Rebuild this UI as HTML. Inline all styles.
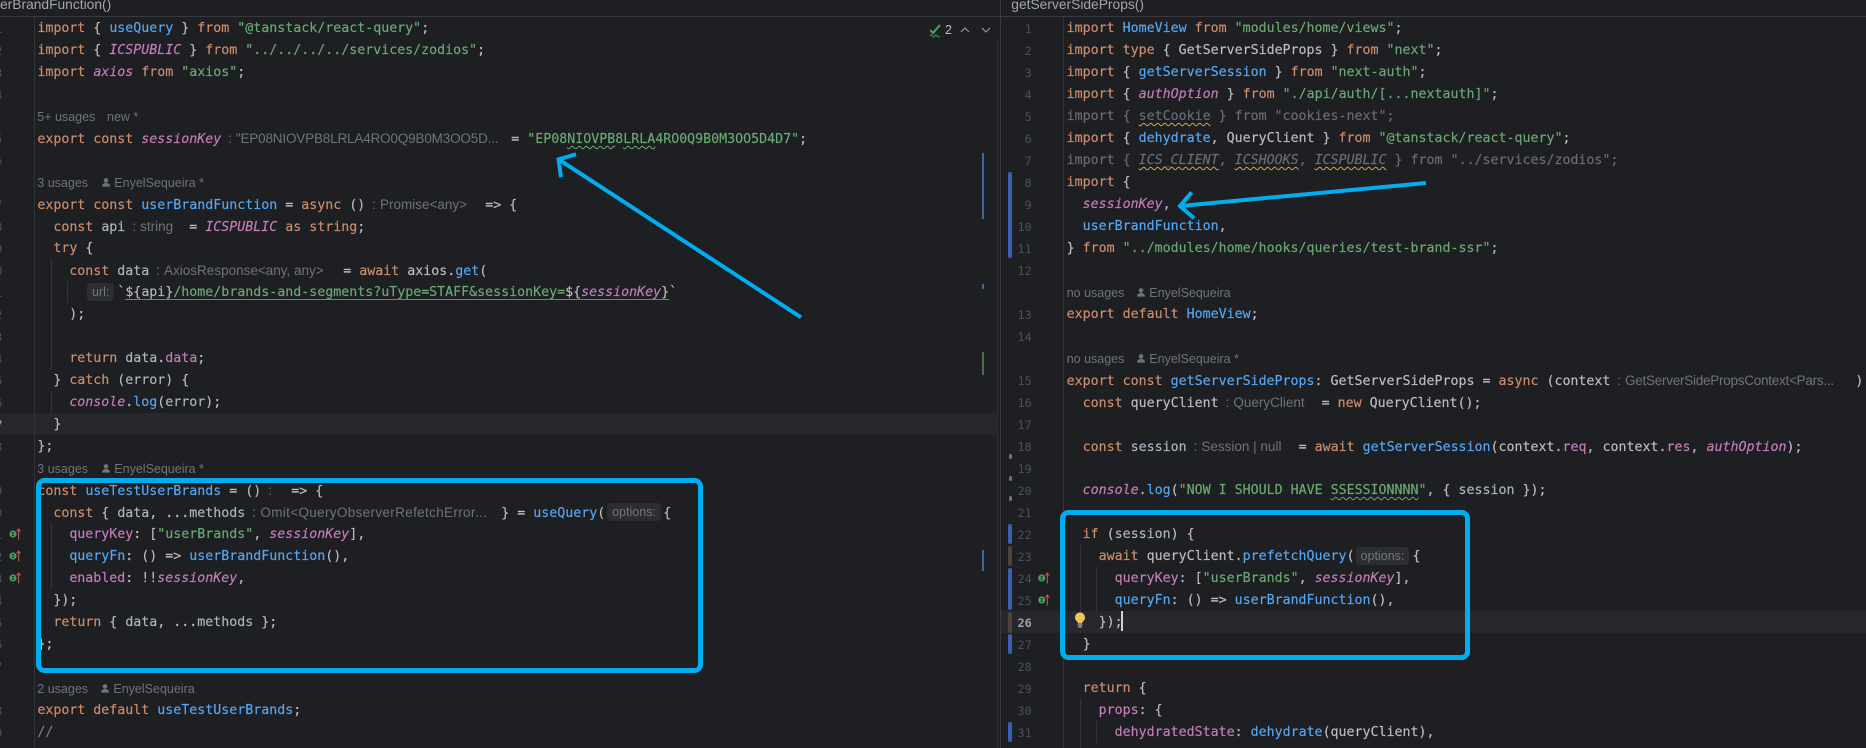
<!DOCTYPE html>
<html><head><meta charset="utf-8">
<style>
html,body{margin:0;padding:0;width:1866px;height:748px;overflow:hidden;background:#1e1f22}
body{position:relative;font-family:"DejaVu Sans Mono","Liberation Mono",monospace;font-size:13.29px;color:#bcbec4}
.a{position:absolute}
.l{position:absolute;height:22px;line-height:22px;white-space:pre;left:37.33px;margin-top:1px;-webkit-text-stroke:.15px}
.r{left:1066.67px}
.n{position:absolute;height:22px;line-height:22px;width:40px;text-align:right;font-size:11.8px;color:#4b5059;margin-top:.5px}
.nl{left:-37.7px}.nr{left:991.7px}
.k{color:#cf8e6d}.s{color:#6aab73}.f{color:#56a8f5}.p{color:#c77dbb}.pi{color:#c77dbb;font-style:italic}.v{color:#a9b7c6}
.d,.d *{color:#6a6d74}
.h{display:inline-block;box-sizing:border-box;padding-left:7px;font-family:"Liberation Sans",sans-serif;font-size:13.5px;color:#6f737a;overflow:visible;white-space:pre;-webkit-text-stroke:0}
.h i{font-style:normal;margin-right:4px}
.sp{display:inline-block}
.u{position:absolute;height:22px;line-height:22px;font-family:"Liberation Sans",sans-serif;font-size:12.5px;color:#6f737a;white-space:pre;margin-top:1px}
.w{text-decoration:underline wavy #6aab73 1px;text-underline-offset:2px}
.y{text-decoration:underline wavy #d8a93a 1px;text-underline-offset:2px}
.t{text-decoration:underline #7a7e85 1px;text-underline-offset:3px}
.chip{position:absolute;height:18px;line-height:18px;background:#2b2d30;border-radius:4px;text-align:center;font-family:"Liberation Sans",sans-serif;font-size:12.5px;color:#72767d}
.m{position:absolute;left:1008.3px;width:4px;border-radius:2px;background:#3b60b0}
.b{background:#4e443c}
.g{position:absolute;width:1px;background:#313438}
.dot{position:absolute;left:1008.6px;width:3.4px;height:5px;border-radius:2px;background:#6f737a}
</style></head><body>

<!-- backgrounds -->
<div class="a" style="left:0;top:413px;width:997px;height:22px;background:#26282e"></div>
<div class="a" style="left:1001px;top:611px;width:865px;height:22px;background:#26282e"></div>
<div class="a" style="left:0;top:16px;width:1866px;height:1px;background:#393b40"></div>
<div class="a" style="left:1000px;top:0;width:1px;height:748px;background:#393b40"></div>
<div class="a" style="left:997px;top:40px;width:1px;height:708px;background:#2f3136"></div>
<div class="a" style="left:34px;top:17px;width:1px;height:731px;background:#313438"></div>
<div class="a" style="left:1063px;top:17px;width:1px;height:731px;background:#313438"></div>

<!-- breadcrumbs -->
<div class="a" style="left:0;top:-3px;height:16px;line-height:16px;font-family:'Liberation Sans',sans-serif;font-size:13.8px;color:#a3a6ad;white-space:pre">erBrandFunction()</div>
<div class="a" style="left:1011.3px;top:-3px;height:16px;line-height:16px;font-family:'Liberation Sans',sans-serif;font-size:13.8px;color:#a3a6ad;white-space:pre">getServerSideProps()</div>

<!-- indent guides -->
<div class="g" style="left:51px;top:259px;height:110px"></div>
<div class="g" style="left:67px;top:281px;height:22px"></div>
<div class="g" style="left:51px;top:391px;height:22px"></div>
<div class="g" style="left:51px;top:523px;height:66px"></div>
<div class="g" style="left:1080px;top:545px;height:88px"></div>
<div class="g" style="left:1096px;top:567px;height:44px"></div>
<div class="g" style="left:1080px;top:699px;height:49px"></div>
<div class="g" style="left:1096px;top:721px;height:22px"></div>

<!-- scroll markers -->
<div class="a" style="left:982px;top:153px;width:2px;height:66px;background:#3a6a9e"></div>
<div class="a" style="left:982px;top:284px;width:2px;height:5px;background:#3a6a9e"></div>
<div class="a" style="left:982px;top:352px;width:2px;height:23px;background:#44704f"></div>
<div class="a" style="left:982px;top:550px;width:2px;height:21px;background:#3a6a9e"></div>

<!-- inspection widget -->
<svg class="a" style="left:930px;top:22px" width="68" height="16" viewBox="2 0 68 16">
<path d="M2 8l3 3 7-8" fill="none" stroke="#4a9c54" stroke-width="2.2"/>
<path d="M2 14q1.2-2 2.4 0t2.4 0 2.4 0 2.400 0" fill="none" stroke="#4a9c54" stroke-width="1"/>
<path d="M33 10l4-4 4 4" fill="none" stroke="#9da0a8" stroke-width="1.1"/>
<path d="M54 6l4 4 4-4" fill="none" stroke="#9da0a8" stroke-width="1.1"/>
</svg>
<div class="a" style="left:945px;top:22px;height:16px;line-height:16px;font-family:'Liberation Sans',sans-serif;font-size:12.5px;color:#bcbec4">2</div>

<!-- left line numbers -->
<div class="n nl" style="top:17px">1</div><div class="n nl" style="top:39px">2</div><div class="n nl" style="top:61px">3</div><div class="n nl" style="top:83px">4</div><div class="n nl" style="top:127px">5</div><div class="n nl" style="top:149px">6</div><div class="n nl" style="top:193px">7</div><div class="n nl" style="top:215px">8</div><div class="n nl" style="top:237px">9</div><div class="n nl" style="top:259px">10</div><div class="n nl" style="top:281px">11</div><div class="n nl" style="top:303px">12</div><div class="n nl" style="top:325px">13</div><div class="n nl" style="top:347px">14</div><div class="n nl" style="top:369px">15</div><div class="n nl" style="top:391px">16</div><div class="n nl" style="top:413px;color:#a1a3ab;font-weight:bold">17</div><div class="n nl" style="top:435px">18</div><div class="n nl" style="top:479px">19</div><div class="n nl" style="top:501px">20</div><div class="n nl" style="top:523px">21</div><div class="n nl" style="top:545px">22</div><div class="n nl" style="top:567px">23</div><div class="n nl" style="top:589px">24</div><div class="n nl" style="top:611px">25</div><div class="n nl" style="top:633px">26</div><div class="n nl" style="top:655px">27</div><div class="n nl" style="top:699px">28</div><div class="n nl" style="top:721px">29</div>

<!-- left code -->
<div class="l" style="top:17px"><span class="k">import</span> { <span class="f">useQuery</span> } <span class="k">from</span> <span class="s">"@tanstack/react-query"</span>;</div>
<div class="l" style="top:39px"><span class="k">import</span> { <span class="pi">ICSPUBLIC</span> } <span class="k">from</span> <span class="s">"../../../../services/zodios"</span>;</div>
<div class="l" style="top:61px"><span class="k">import</span> <span class="pi">axios</span> <span class="k">from</span> <span class="s">"axios"</span>;</div>
<div class="u" style="left:37.3px;top:105px">5+ usages</div><div class="u" style="left:107px;top:105px">new *</div>
<div class="l" style="top:127px"><span class="k">export const</span> <span class="pi">sessionKey</span><span class="h" style="width:282px;letter-spacing:-.17px"><i>:</i>"EP08NIOVPB8LRLA4RO0Q9B0M3OO5D...</span> = <span class="s">"EP08<span class="w">NIOVPB</span>8<span class="w">LRLA</span>4RO0Q9B0M3OO5D4D7"</span>;</div>
<div class="u" style="left:37.3px;top:171px">3 usages</div><div class="u" style="left:114.3px;top:171px">EnyelSequeira *</div>
<div class="l" style="top:193px"><span class="k">export const</span> <span class="f">userBrandFunction</span> = <span class="k">async</span> ()<span class="h" style="width:112px"><i>:</i>Promise&lt;any&gt;</span> =&gt; {</div>
<div class="l" style="top:215px">  <span class="k">const</span> <span class="v">api</span><span class="h" style="width:56px"><i>:</i>string</span> = <span class="pi">ICSPUBLIC</span> <span class="k">as</span> <span class="k">string</span>;</div>
<div class="l" style="top:237px">  <span class="k">try</span> {</div>
<div class="l" style="top:259px">    <span class="k">const</span> <span class="v">data</span><span class="h" style="width:186px"><i>:</i>AxiosResponse&lt;any, any&gt;</span> = <span class="k">await</span> axios.<span class="f">get</span>(</div>
<div class="chip" style="left:87.3px;top:283px;width:26.7px">url:</div>
<div class="l" style="top:281px">      <span class="sp" style="width:32px"></span>`<span class="t">${<span class="v">api</span>}<span class="s">/home/brands-and-segments?uType=STAFF&amp;sessionKey=</span>${<span class="pi">sessionKey</span>}</span>`</div>
<div class="l" style="top:303px">    );</div>
<div class="l" style="top:347px">    <span class="k">return</span> <span class="v">data</span>.<span class="p">data</span>;</div>
<div class="l" style="top:369px">  } <span class="k">catch</span> (<span class="v">error</span>) {</div>
<div class="l" style="top:391px">    <span class="pi">console</span>.<span class="f">log</span>(<span class="v">error</span>);</div>
<div class="l" style="top:413px">  }</div>
<div class="l" style="top:435px">};</div>
<div class="u" style="left:37.3px;top:457px">3 usages</div><div class="u" style="left:114.3px;top:457px">EnyelSequeira *</div>
<div class="l" style="top:479px"><span class="k">const</span> <span class="f">useTestUserBrands</span> = ()<span class="h" style="width:22px"><i>:</i></span> =&gt; {</div>
<div class="chip" style="left:607px;top:503px;width:54px">options:</div>
<div class="l" style="top:501px">  <span class="k">const</span> { <span class="v">data</span>, ...<span class="v">methods</span><span class="h" style="width:248px;letter-spacing:.34px"><i>:</i>Omit&lt;QueryObserverRefetchError...</span> } = <span class="f">useQuery</span>(<span class="sp" style="width:58px"></span>{</div>
<div class="l" style="top:523px">    <span class="p">queryKey</span>: [<span class="s">"userBrands"</span>, <span class="pi">sessionKey</span>],</div>
<div class="l" style="top:545px">    <span class="f">queryFn</span>: () =&gt; <span class="f">userBrandFunction</span>(),</div>
<div class="l" style="top:567px">    <span class="p">enabled</span>: !!<span class="pi">sessionKey</span>,</div>
<div class="l" style="top:589px">  });</div>
<div class="l" style="top:611px">  <span class="k">return</span> { <span class="v">data</span>, ...<span class="v">methods</span> };</div>
<div class="l" style="top:633px">};</div>
<div class="u" style="left:37.3px;top:677px">2 usages</div><div class="u" style="left:113.4px;top:677px">EnyelSequeira</div>
<div class="l" style="top:699px"><span class="k">export default</span> <span class="f">useTestUserBrands</span>;</div>
<div class="l" style="top:721px;color:#7a7e85">//</div>

<!-- right line numbers -->
<div class="n nr" style="top:17px">1</div><div class="n nr" style="top:39px">2</div><div class="n nr" style="top:61px">3</div><div class="n nr" style="top:83px">4</div><div class="n nr" style="top:105px">5</div><div class="n nr" style="top:127px">6</div><div class="n nr" style="top:149px">7</div><div class="n nr" style="top:171px">8</div><div class="n nr" style="top:193px">9</div><div class="n nr" style="top:215px">10</div><div class="n nr" style="top:237px">11</div><div class="n nr" style="top:259px">12</div><div class="n nr" style="top:303px">13</div><div class="n nr" style="top:325px">14</div><div class="n nr" style="top:369px">15</div><div class="n nr" style="top:391px">16</div><div class="n nr" style="top:413px">17</div><div class="n nr" style="top:435px">18</div><div class="n nr" style="top:457px">19</div><div class="n nr" style="top:479px">20</div><div class="n nr" style="top:501px">21</div><div class="n nr" style="top:523px">22</div><div class="n nr" style="top:545px">23</div><div class="n nr" style="top:567px">24</div><div class="n nr" style="top:589px">25</div><div class="n nr" style="top:611px;color:#a1a3ab;font-weight:bold">26</div><div class="n nr" style="top:633px">27</div><div class="n nr" style="top:655px">28</div><div class="n nr" style="top:677px">29</div><div class="n nr" style="top:699px">30</div><div class="n nr" style="top:721px">31</div>

<!-- right change markers -->
<div class="m" style="top:172px;height:86px"></div>
<div class="m" style="top:524px;height:20px"></div>
<div class="m b" style="top:546px;height:20px"></div>
<div class="m" style="top:568px;height:42px"></div>
<div class="m b" style="top:612px;height:21px"></div>
<div class="m" style="top:634px;height:20px"></div>
<div class="m" style="top:722px;height:20px"></div>
<div class="dot" style="top:454px"></div><div class="dot" style="top:476px"></div><div class="dot" style="top:496px"></div>

<!-- right code -->
<div class="l r" style="top:17px"><span class="k">import</span> <span class="f">HomeView</span> <span class="k">from</span> <span class="s">"modules/home/views"</span>;</div>
<div class="l r" style="top:39px"><span class="k">import type</span> { GetServerSideProps } <span class="k">from</span> <span class="s">"next"</span>;</div>
<div class="l r" style="top:61px"><span class="k">import</span> { <span class="f">getServerSession</span> } <span class="k">from</span> <span class="s">"next-auth"</span>;</div>
<div class="l r" style="top:83px"><span class="k">import</span> { <span class="pi">authOption</span> } <span class="k">from</span> <span class="s">"./api/auth/[...nextauth]"</span>;</div>
<div class="l r d" style="top:105px">import { <span class="y">setCookie</span> } from "cookies-next";</div>
<div class="l r" style="top:127px"><span class="k">import</span> { <span class="f">dehydrate</span>, QueryClient } <span class="k">from</span> <span class="s">"@tanstack/react-query"</span>;</div>
<div class="l r d" style="top:149px">import { <em class="y">ICS_CLIENT</em>, <em class="y">ICSHOOKS</em>, <em class="y">ICSPUBLIC</em> } from "../services/zodios";</div>
<div class="l r" style="top:171px"><span class="k">import</span> {</div>
<div class="l r" style="top:193px">  <span class="pi">sessionKey</span>,</div>
<div class="l r" style="top:215px">  <span class="f">userBrandFunction</span>,</div>
<div class="l r" style="top:237px">} <span class="k">from</span> <span class="s">"../modules/home/hooks/queries/test-brand-ssr"</span>;</div>
<div class="u" style="left:1066.7px;top:281px">no usages</div><div class="u" style="left:1149.3px;top:281px">EnyelSequeira</div>
<div class="l r" style="top:303px"><span class="k">export default</span> <span class="f">HomeView</span>;</div>
<div class="u" style="left:1066.7px;top:347px">no usages</div><div class="u" style="left:1149.3px;top:347px">EnyelSequeira *</div>
<div class="l r" style="top:369px"><span class="k">export const</span> <span class="f">getServerSideProps</span>: GetServerSideProps = <span class="k">async</span> (context<span class="h" style="width:245px;letter-spacing:-.25px"><i>:</i>GetServerSidePropsContext&lt;Pars...</span>)</div>
<div class="l r" style="top:391px">  <span class="k">const</span> queryClient<span class="h" style="width:95px"><i>:</i>QueryClient</span> = <span class="k">new</span> QueryClient();</div>
<div class="l r" style="top:435px">  <span class="k">const</span> <span class="v">session</span><span class="h" style="width:104px"><i>:</i>Session | null</span> = <span class="k">await</span> <span class="f">getServerSession</span>(context.<span class="p">req</span>, context.<span class="p">res</span>, <span class="pi">authOption</span>);</div>
<div class="l r" style="top:479px">  <span class="pi">console</span>.<span class="f">log</span>(<span class="s">"NOW I SHOULD HAVE <span class="w">SSESSIONNNN</span>"</span>, { <span class="v">session</span> });</div>
<div class="l r" style="top:523px">  <span class="k">if</span> (<span class="v">session</span>) {</div>
<div class="chip" style="left:1356px;top:547px;width:53px">options:</div>
<div class="l r" style="top:545px">    <span class="k">await</span> queryClient.<span class="f">prefetchQuery</span>(<span class="sp" style="width:58px"></span>{</div>
<div class="l r" style="top:567px">      <span class="p">queryKey</span>: [<span class="s">"userBrands"</span>, <span class="pi">sessionKey</span>],</div>
<div class="l r" style="top:589px">      <span class="f">queryFn</span>: () =&gt; <span class="f">userBrandFunction</span>(),</div>
<div class="l r" style="top:611px">    });</div>
<div class="a" style="left:1121px;top:611px;width:2px;height:20px;background:#ced0d6"></div>
<div class="l r" style="top:633px">  }</div>
<div class="l r" style="top:677px">  <span class="k">return</span> {</div>
<div class="l r" style="top:699px">    <span class="p">props</span>: {</div>
<div class="l r" style="top:721px">      <span class="p">dehydratedState</span>: <span class="f">dehydrate</span>(queryClient),</div>

<!-- icon + annotation overlay -->
<svg class="a" style="left:0;top:0" width="1866" height="748" viewBox="0 0 1866 748">
<defs>
<g id="person"><circle cx="0" cy="-2.6" r="2.3" fill="#6f737a"/><path d="M-4 3.6c0-2.6 1.8-3.6 4-3.6s4 1 4 3.6z" fill="#6f737a"/></g>
<g id="hook"><circle cx="0" cy="0" r="3.6" fill="#4a9c54"/><path d="M-1 -1.6h2M0 -1.6v3.2M-1 1.6h2" stroke="#1e1f22" stroke-width=".8" fill="none"/><path d="M5.6 5.5v-10M3.6 -2.4l2-2.6 2 2.6" stroke="#c75450" stroke-width="1.1" fill="none"/></g>
</defs>
<use href="#person" x="106" y="183"/>
<use href="#person" x="106" y="469"/>
<use href="#person" x="105" y="689"/>
<use href="#person" x="1141" y="293"/>
<use href="#person" x="1141" y="359"/>
<use href="#hook" x="13" y="534"/>
<use href="#hook" x="13" y="556"/>
<use href="#hook" x="13" y="578"/>
<use href="#hook" x="1041.7" y="578"/>
<use href="#hook" x="1041.7" y="600"/>
<!-- bulb -->
<path d="M1080 612.5a5 5 0 0 1 3.2 8.8c-.8.7-1 1.300-1 2.200h-4.400c0-.9-.2-1.500-1-2.200a5 5 0 0 1 3.200-8.800z" fill="#f2c55c"/>
<path d="M1077.500 625h5M1078 627h4" stroke="#c9ccd2" stroke-width="1"/>
<!-- annotation boxes -->
<rect x="38.500" y="480.500" width="662" height="190" rx="6" fill="none" stroke="#00aeef" stroke-width="5"/>
<rect x="1062.500" y="512.500" width="405" height="145" rx="6" fill="none" stroke="#00aeef" stroke-width="5"/>
<!-- arrows -->
<path d="M801 317.300L558.500 159.300M576 154.300L558.500 159.300L561 177.300" fill="none" stroke="#00aeef" stroke-width="4"/>
<path d="M1426 183L1180 206M1191.700 192.300L1180 206L1194 218.300" fill="none" stroke="#00aeef" stroke-width="4"/>
</svg>
</body></html>
